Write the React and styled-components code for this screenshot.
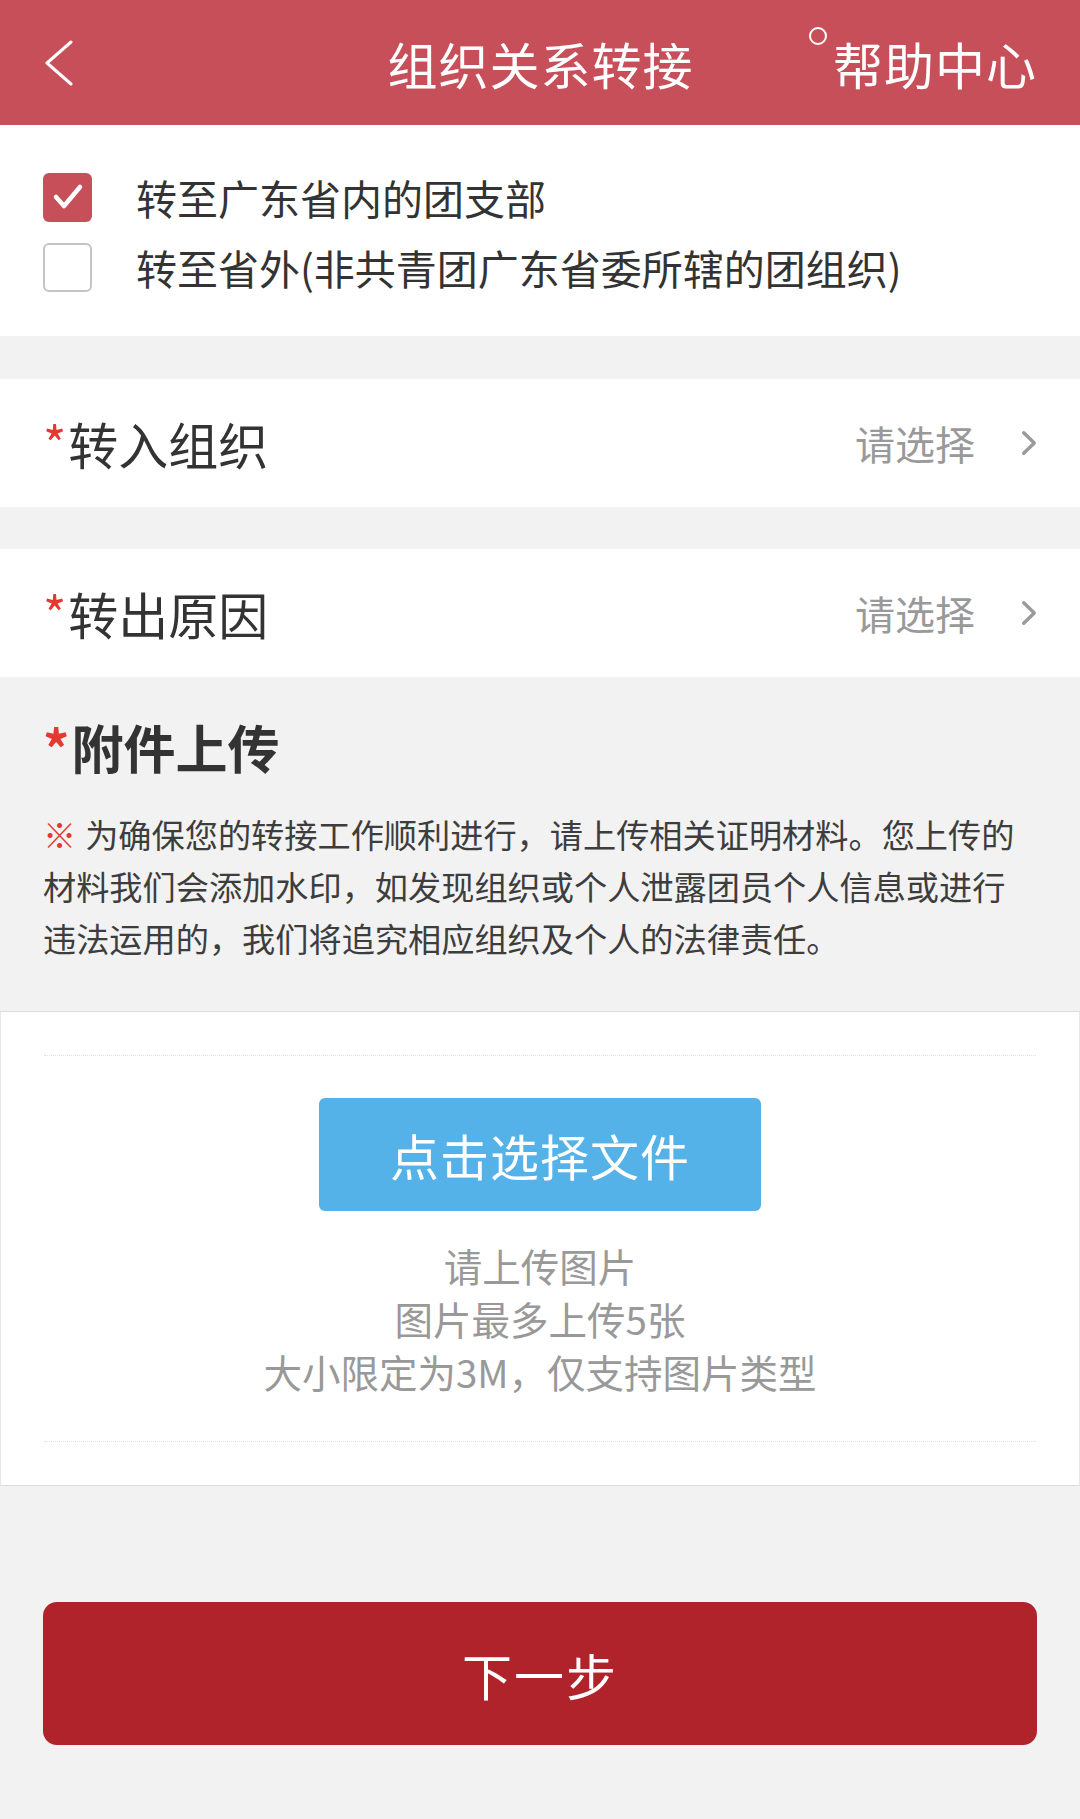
import React from "react";
import styled, { createGlobalStyle } from "styled-components";

const GlobalStyle = createGlobalStyle`
  html, body {
    margin: 0;
    padding: 0;
    background: #f2f2f2;
  }
  body {
    font-family: "Noto Sans CJK SC", "Noto Sans", "Liberation Sans", sans-serif;
    color: #333;
  }
  * { box-sizing: border-box; }
`;

const Page = styled.div`
  width: 1080px;
  min-height: 1819px;
  background: #f2f2f2;
  display: flex;
  flex-direction: column;
`;

const Header = styled.header`
  height: 125px;
  background: #c74f59;
  color: #fff;
  display: grid;
  grid-template-columns: 1fr auto 1fr;
  align-items: center;
  padding: 0 43px 0 44px;
`;

const BackButton = styled.button`
  justify-self: start;
  background: none;
  border: 0;
  padding: 0;
  width: 36px;
  height: 50px;
  display: flex;
  align-items: center;
  cursor: pointer;
`;

const Title = styled.h1`
  margin: 0;
  font-size: 50px;
  font-weight: 400;
  line-height: 60px;
  letter-spacing: 1px;
`;

const Help = styled.div`
  justify-self: end;
  display: flex;
  align-items: flex-start;
  font-size: 50px;
  line-height: 60px;
  letter-spacing: 1px;
`;

const HelpDot = styled.span`
  width: 18px;
  height: 18px;
  border: 2px solid #fff;
  border-radius: 50%;
  margin-top: -6px;
  margin-right: 6px;
`;

const OptionPanel = styled.section`
  background: #fff;
  padding: 37px 43px 34px;
  display: flex;
  flex-direction: column;
`;

const OptionRow = styled.label`
  height: 70px;
  display: flex;
  align-items: center;
  gap: 44px;
  font-size: 41px;
  color: #333;
  cursor: pointer;
`;

const Box = styled.span`
  width: 49px;
  height: 49px;
  flex: none;
  border-radius: 6px;
  display: flex;
  align-items: center;
  justify-content: center;
  background: ${(p) => (p.checked ? "#c74f59" : "#fff")};
  border: ${(p) => (p.checked ? "none" : "2px solid #c4c4c4")};
`;

const SelectRow = styled.div`
  margin-top: ${(p) => p.gap}px;
  height: 128px;
  background: #fff;
  display: flex;
  align-items: center;
  padding: 0 43px;
`;

const Required = styled.span`
  display: flex;
  align-items: flex-start;
`;

const Star = styled.span`
  color: #e23a33;
  margin-right: 2px;
  line-height: 1;
  padding-top: 4px;
`;

const FieldLabel = styled.div`
  flex: 1;
  display: flex;
  font-size: 50px;
  color: #333;
  line-height: 60px;
`;

const Placeholder = styled.span`
  font-size: 40px;
  color: #999;
  margin-right: 46px;
`;

const UploadSection = styled.section`
  padding: 40px 43px 47px;
`;

const SectionTitle = styled.h2`
  margin: 0;
  display: flex;
  font-size: 52px;
  line-height: 60px;
  font-weight: 700;
  color: #333;
`;

const Notice = styled.div`
  margin-top: 31px;
  font-size: 33.2px;
  line-height: 52px;
  color: #3d3d3d;
  white-space: nowrap;
`;

const NoticeLine = styled.div`
  display: flex;
  gap: 9px;
`;

const Mark = styled.span`
  color: #e23a33;
`;

const UploadBox = styled.div`
  background: #fff;
  border: 1px solid #dcdcdc;
  border-left-color: #e6e6e6;
  border-right-color: #e6e6e6;
  padding: 43px 43px 43px;
`;

const UploadInner = styled.div`
  border-top: 1px dotted #e2e2e2;
  border-bottom: 1px dotted #e2e2e2;
  padding: 42px 0 43px;
  display: flex;
  flex-direction: column;
  align-items: center;
`;

const PickButton = styled.button`
  width: 442px;
  height: 113px;
  border: 0;
  border-radius: 6px;
  background: #54b2e9;
  color: #fff;
  font-family: inherit;
  font-size: 49px;
  letter-spacing: 1px;
  cursor: pointer;
`;

const Hints = styled.div`
  margin-top: 28px;
  text-align: center;
  font-size: 38.5px;
  line-height: 53px;
  color: #999;
`;

const Footer = styled.div`
  padding: 116px 43px 0;
`;

const NextButton = styled.button`
  width: 100%;
  height: 143px;
  border: 0;
  border-radius: 14px;
  background: #b0232b;
  color: #fff;
  font-family: inherit;
  font-size: 50px;
  letter-spacing: 2px;
  cursor: pointer;
`;

const Chevron = ({ color, width = 16, height = 26, stroke = 3.5 }) => (
  <svg width={width} height={height} viewBox={`0 0 ${width} ${height}`} fill="none">
    <path
      d={`M${stroke / 2 + 1} ${stroke / 2 + 1} L${width - stroke / 2 - 1} ${height / 2} L${stroke / 2 + 1} ${height - stroke / 2 - 1}`}
      stroke={color}
      strokeWidth={stroke}
      strokeLinecap="round"
      strokeLinejoin="round"
    />
  </svg>
);

const Tick = () => (
  <svg width="34" height="30" viewBox="0 0 34 30" fill="none">
    <path d="M5 15 L13 24 L29 5" stroke="#fff" strokeWidth="4.5" strokeLinecap="round" strokeLinejoin="round" />
  </svg>
);

const Option = ({ checked, children }) => (
  <OptionRow>
    <Box checked={checked}>{checked && <Tick />}</Box>
    {children}
  </OptionRow>
);

const RequiredText = ({ children }) => (
  <Required>
    <Star>*</Star>
    <span>{children}</span>
  </Required>
);

const Field = ({ label, gap }) => (
  <SelectRow gap={gap}>
    <FieldLabel>
      <RequiredText>{label}</RequiredText>
    </FieldLabel>
    <Placeholder>请选择</Placeholder>
    <Chevron color="#9a9a9a" />
  </SelectRow>
);

const noticeLines = [
  "材料我们会添加水印，如发现组织或个人泄露团员个人信息或进行",
  "违法运用的，我们将追究相应组织及个人的法律责任。",
];

export default function App() {
  return (
    <Page>
      <GlobalStyle />
      <Header>
        <BackButton aria-label="返回">
          <svg width="30" height="46" viewBox="0 0 30 46" fill="none">
            <path d="M27 2 L3 23 L27 44" stroke="#fff" strokeWidth="3" strokeLinecap="round" strokeLinejoin="round" />
          </svg>
        </BackButton>
        <Title>组织关系转接</Title>
        <Help>
          <HelpDot />
          帮助中心
        </Help>
      </Header>

      <OptionPanel>
        <Option checked>转至广东省内的团支部</Option>
        <Option>转至省外(非共青团广东省委所辖的团组织)</Option>
      </OptionPanel>

      <Field label="转入组织" gap={43} />
      <Field label="转出原因" gap={42} />

      <UploadSection>
        <SectionTitle>
          <RequiredText>附件上传</RequiredText>
        </SectionTitle>
        <Notice>
          <NoticeLine>
            <Mark>※</Mark>
            <span>为确保您的转接工作顺利进行，请上传相关证明材料。您上传的</span>
          </NoticeLine>
          {noticeLines.map((line) => (
            <div key={line}>{line}</div>
          ))}
        </Notice>
      </UploadSection>

      <UploadBox>
        <UploadInner>
          <PickButton>点击选择文件</PickButton>
          <Hints>
            <div>请上传图片</div>
            <div>图片最多上传5张</div>
            <div>大小限定为3M，仅支持图片类型</div>
          </Hints>
        </UploadInner>
      </UploadBox>

      <Footer>
        <NextButton>下一步</NextButton>
      </Footer>
    </Page>
  );
}
